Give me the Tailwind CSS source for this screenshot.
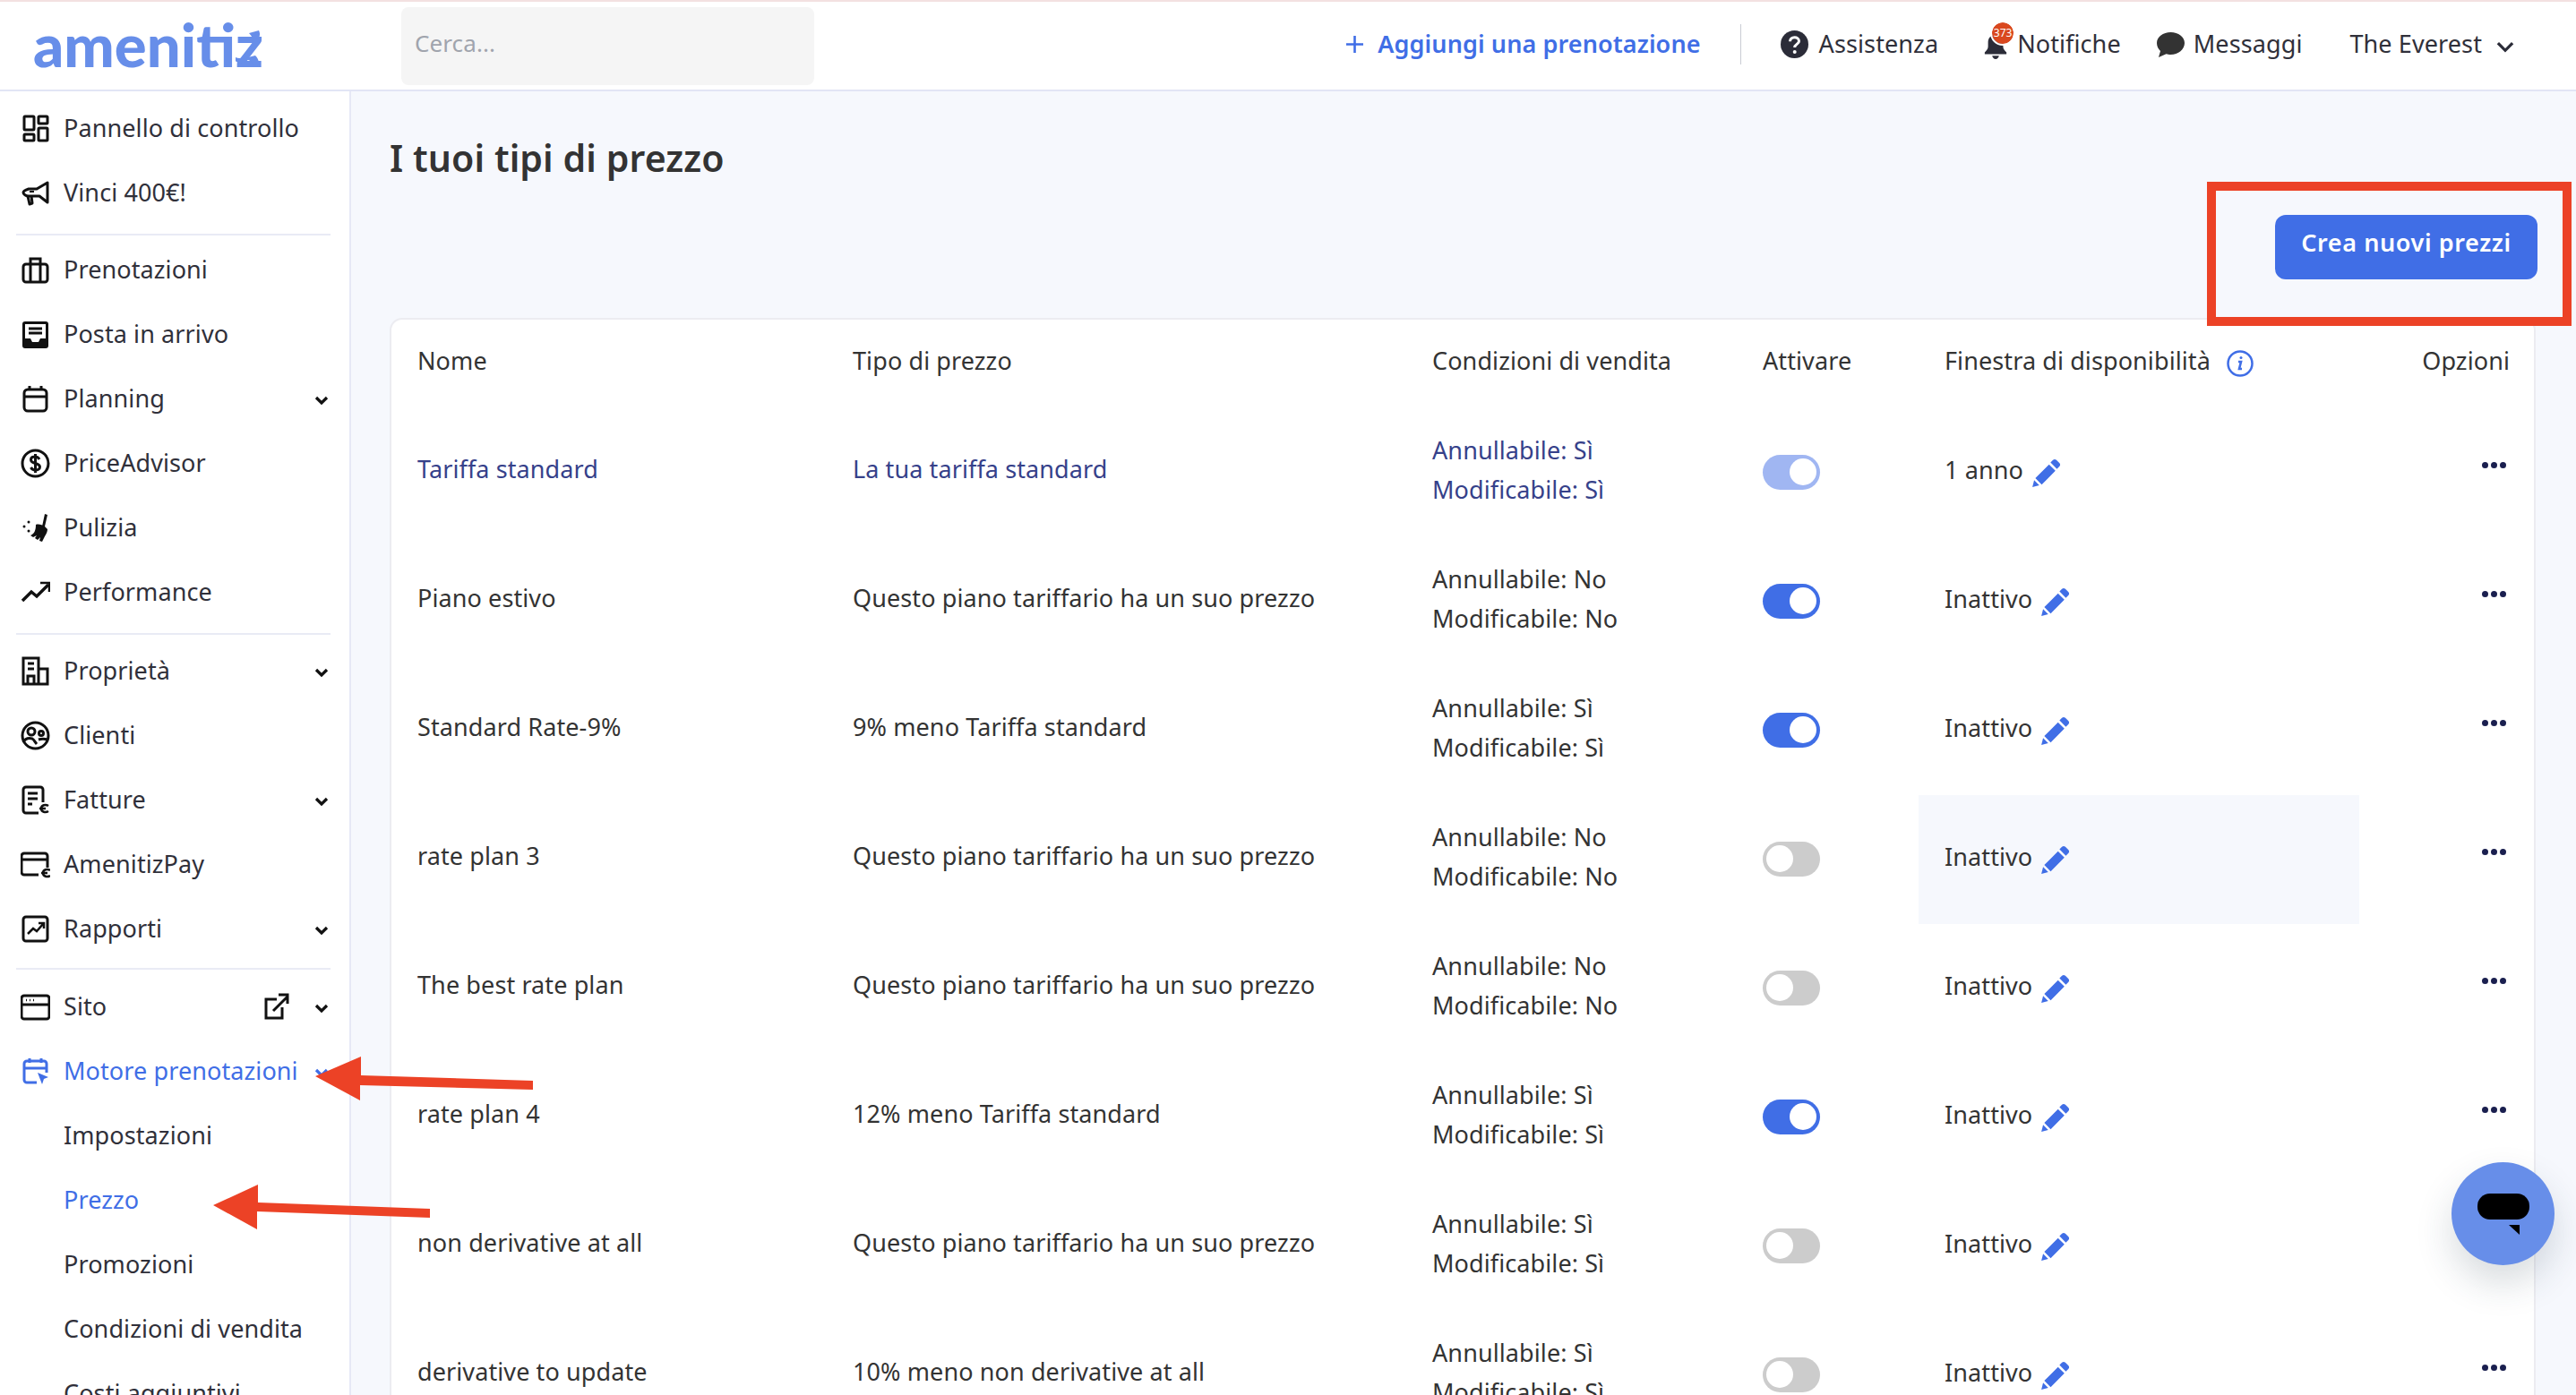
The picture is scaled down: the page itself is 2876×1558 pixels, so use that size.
<!DOCTYPE html>
<html lang="it">
  <head>
    <meta charset="UTF-8" />
    <title>Amenitiz - I tuoi tipi di prezzo</title>
    <script src="https://cdn.jsdelivr.net/npm/@tailwindcss/browser@4"></script>
  </head>
  <body class="relative h-screen overflow-hidden bg-white font-['Noto_Sans',sans-serif] text-[27px] tracking-[0.1px] text-[#30303a]">
    <div class="h-[2px] bg-[#f3e1e1]"></div>

    <!-- header -->
    <header class="flex h-[100px] items-center border-b-2 border-[#e2e5f5] pr-[68px]">
      <div class="relative w-[448px] pl-[37px]">
        <span class="font-['Lato',sans-serif] text-[67px] leading-none font-black tracking-[0px] text-[#678ee9]">amenitiz</span>
        <svg class="absolute top-[18px] left-[263px] h-[41px] w-[27px]" viewBox="0 0 27 41" fill="#678ee9"><path d="M15 3L26 0c2 4 1 8-2 10l-5-2zM0 30c4 2 10 0 14 0l8-2c4 4 5 8 2 13-3-1-6-7-10-8-6 4-12 4-14 1z"/></svg>
      </div>
      <input class="h-[87px] w-[461px] rounded-lg bg-[#f5f5f5] px-[15px] pb-[6px] text-[26px] placeholder:text-[#a0a4ad]" placeholder="Cerca..." />
      <div class="ml-auto flex items-center pb-[3px]">
        <a class="flex items-center gap-[16px] font-semibold text-[#406ee6]">
          <svg class="h-[19px] w-[19px]" viewBox="0 0 19 19" stroke="#406ee6" stroke-width="2.6"><path d="M9.5 0v19M0 9.5h19"/></svg>
          Aggiungi una prenotazione
        </a>
        <div class="mx-[44px] h-[45px] w-[1px] bg-[#c9ccd4]"></div>
        <a class="flex items-center gap-[12px]">
          <svg class="h-[31px] w-[31px]" viewBox="0 0 31 31"><circle cx="15.5" cy="15.5" r="15.5" fill="#2b2c38"/><path d="M10.5 12.3c0-3 2.3-4.6 5-4.6s5 1.600 5 4.200c0 3.600-4.800 3.400-4.800 7" fill="none" stroke="#fff" stroke-width="3"/><circle cx="15.700" cy="24" r="2" fill="#fff"/></svg>
          Assistenza
        </a>
        <a class="relative ml-[50px] flex items-center gap-[10px]">
          <svg class="mt-[4px] h-[28px] w-[28px]" viewBox="0 0 28 30" fill="#2b2c38"><path d="M14 1c5 0 9 3 9 9v5c0 3 2 5 4 7v2H1v-2c2-2 4-4 4-7v-5c0-6 4-9 9-9z"/><path d="M10 26h8c0 2-2 4-4 4s-4-2-4-4z"/></svg>
          Notifiche
          <span class="absolute top-[-4px] left-[10px] flex h-[24px] w-[24px] items-center justify-center rounded-full bg-[#d9481f] text-[12px] leading-none tracking-normal text-white outline-2 outline-white">373</span>
        </a>
        <a class="ml-[40px] flex items-center gap-[10px]">
          <svg class="h-[30px] w-[31px]" viewBox="0 0 31 30" fill="#333"><path d="M15.500 1C24 1 31 6 31 13s-7 13-15.500 13c-2 0-3.500-.2-5-.7L2 29l2-7C1.500 19.500 0 16.500 0 13 0 6 7 1 15.500 1z"/></svg>
          Messaggi
        </a>
        <a class="ml-[53px] flex items-center gap-[15px]">
          The Everest
          <svg class="mt-[5px] h-[13px] w-[22px]" viewBox="0 0 19 12" fill="none" stroke="#2b2c38" stroke-width="3"><path d="M2 2l7.500 7.500L17 2"/></svg>
        </a>
      </div>
    </header>

    <div class="flex h-[1456px]">
      <!-- sidebar -->
      <aside class="w-[392px] shrink-0 border-r-2 border-[#e6e8f6] pt-[5px]">
        <nav>
          <a class="flex h-[72px] items-center"><span class="flex w-[71px] justify-center pl-[8px]"><svg class="h-[31px] w-[31px]" viewBox="0 0 31 31" fill="none" stroke="#111" stroke-width="3"><rect x="3" y="2" width="11" height="15" rx="1"/><rect x="19" y="2" width="10" height="8" rx="1"/><rect x="3" y="22" width="11" height="7" rx="1"/><rect x="19" y="15" width="10" height="14" rx="1"/></svg></span>Pannello di controllo</a>
          <a class="flex h-[72px] items-center"><span class="flex w-[71px] justify-center pl-[8px]"><svg class="h-[31px] w-[31px]" viewBox="0 0 31 31" fill="none" stroke="#111" stroke-width="3" stroke-linejoin="round"><path d="M29 4v22l-9-7H8c-3 0-6-2-6-4s3-3 6-4h9z"/><path d="M7 19l2 9 3-1-1-8"/><path d="M9 14h5" stroke-width="2"/></svg></span>Vinci 400€!</a>
        </nav>
        <hr class="mt-[10px] mr-[21px] mb-[2px] ml-[18px] border-t-2 border-[#e9ebf5]" />
        <nav>
          <a class="flex h-[72px] items-center"><span class="flex w-[71px] justify-center pl-[8px]"><svg class="h-[31px] w-[31px]" viewBox="0 0 31 31" fill="none" stroke="#111" stroke-width="3"><rect x="2" y="9" width="27" height="20" rx="3"/><path d="M10 9V3h11v6M10 9v20M21 9v20"/></svg></span>Prenotazioni</a>
          <a class="flex h-[72px] items-center"><span class="flex w-[71px] justify-center pl-[8px]"><svg class="h-[31px] w-[31px]" viewBox="0 0 31 31"><path d="M4 1h23a3 3 0 0 1 3 3v24a3 3 0 0 1-3 3H4a3 3 0 0 1-3-3V4a3 3 0 0 1 3-3z" fill="#111"/><path d="M4 4h23v16h-6l-2 4h-7l-2-4H4z" fill="#fff"/><path d="M8 9h15M8 14h15" stroke="#111" stroke-width="3"/></svg></span>Posta in arrivo</a>
          <a class="flex h-[72px] items-center"><span class="flex w-[71px] justify-center pl-[8px]"><svg class="h-[31px] w-[31px]" viewBox="0 0 31 31" fill="none" stroke="#111" stroke-width="3"><rect x="3" y="5" width="25" height="24" rx="4"/><path d="M3 13h25M9 1v5M22 1v5"/></svg></span>Planning<svg class="absolute left-[351px] mt-[5px] h-[11px] w-[16px]" viewBox="0 0 16 11" fill="none" stroke="#111" stroke-width="3.200"><path d="M2 2l6 6 6-6"/></svg></a>
          <a class="flex h-[72px] items-center"><span class="flex w-[71px] justify-center pl-[8px]"><svg class="h-[33px] w-[33px]" viewBox="0 0 33 33" fill="none" stroke="#111" stroke-width="3"><circle cx="16.500" cy="16.500" r="14.500"/><path d="M21 12c-1-2-3-3-5-3-3 0-4.500 1.500-4.500 3.500 0 5 10 3 10 8 0 2-2 3.500-5 3.500-2 0-4-1-5-3M16.500 6v21"/></svg></span>PriceAdvisor</a>
          <a class="flex h-[72px] items-center"><span class="flex w-[71px] justify-center pl-[8px]"><svg class="h-[33px] w-[33px]" viewBox="0 0 33 33" fill="#111"><path d="M27 1l3 1-3 13h-3zM17 13c3-1 7 0 10 2l3 3c0 2-1 5-3 8-1 2-2 4-3 6l-3-1 1-4-3 3-3-2 2-3-4 2-3-2c4-2 6-5 6-12z"/><circle cx="4" cy="15" r="1.500"/><circle cx="9" cy="10" r="1.500"/><circle cx="9" cy="20" r="1.500"/></svg></span>Pulizia</a>
          <a class="flex h-[72px] items-center"><span class="flex w-[71px] justify-center pl-[8px]"><svg class="h-[33px] w-[33px]" viewBox="0 0 33 33" fill="none" stroke="#111" stroke-width="3.500"><path d="M2 26l10-10 6 5 13-13"/><path d="M22 6h10v10" stroke-width="2.500"/></svg></span>Performance</a>
        </nav>
        <hr class="mt-[10px] mr-[21px] mb-[4px] ml-[18px] border-t-2 border-[#e9ebf5]" />
        <nav>
          <a class="flex h-[72px] items-center"><span class="flex w-[71px] justify-center pl-[8px]"><svg class="h-[33px] w-[33px]" viewBox="0 0 33 33" fill="none" stroke="#111" stroke-width="3"><path d="M3 2h17v29H3zM20 14h10v17H20zM8 8h7M8 14h7M8 31v-9h7v9"/></svg></span>Proprietà<svg class="absolute left-[351px] mt-[5px] h-[11px] w-[16px]" viewBox="0 0 16 11" fill="none" stroke="#111" stroke-width="3.200"><path d="M2 2l6 6 6-6"/></svg></a>
          <a class="flex h-[72px] items-center"><span class="flex w-[71px] justify-center pl-[8px]"><svg class="h-[33px] w-[33px]" viewBox="0 0 33 33" fill="none" stroke="#111" stroke-width="3"><circle cx="16.500" cy="16.500" r="14.500"/><circle cx="12" cy="12" r="4"/><circle cx="23" cy="14" r="2.500"/><path d="M3 24c2-4 6-5 10-4 2 1 3 4 5 6M20 21c3-1 7-1 10 0"/></svg></span>Clienti</a>
          <a class="flex h-[72px] items-center"><span class="flex w-[71px] justify-center pl-[8px]"><svg class="h-[33px] w-[33px]" viewBox="0 0 33 33" fill="none" stroke="#111" stroke-width="3"><path d="M20 31H6a3 3 0 0 1-3-3V5a3 3 0 0 1 3-3h16a3 3 0 0 1 3 3v14M8 9h11M8 15h11M8 21h5"/><path d="M31 23c-3-2-8-1-8 3s5 5 8 3M21 26h7" stroke-width="2.500"/></svg></span>Fatture<svg class="absolute left-[351px] mt-[5px] h-[11px] w-[16px]" viewBox="0 0 16 11" fill="none" stroke="#111" stroke-width="3.200"><path d="M2 2l6 6 6-6"/></svg></a>
          <a class="flex h-[72px] items-center"><span class="flex w-[71px] justify-center pl-[8px]"><svg class="h-[33px] w-[33px]" viewBox="0 0 33 33" fill="none" stroke="#111" stroke-width="3"><path d="M20 28H4a3 3 0 0 1-3-3V7a3 3 0 0 1 3-3h23a3 3 0 0 1 3 3v13M1 11h29"/><path d="M33 23c-3-2-8-1-8 3s5 5 8 3M23 26h7" stroke-width="2.500"/></svg></span>AmenitizPay</a>
          <a class="flex h-[72px] items-center"><span class="flex w-[71px] justify-center pl-[8px]"><svg class="h-[31px] w-[31px]" viewBox="0 0 31 31" fill="none" stroke="#111" stroke-width="3"><rect x="2" y="2" width="27" height="27" rx="3"/><path d="M7 21l6-6 4 3 7-8M19 9h6v6" stroke-width="2.500"/></svg></span>Rapporti<svg class="absolute left-[351px] mt-[5px] h-[11px] w-[16px]" viewBox="0 0 16 11" fill="none" stroke="#111" stroke-width="3.200"><path d="M2 2l6 6 6-6"/></svg></a>
        </nav>
        <hr class="mt-[8px] mr-[21px] mb-[5px] ml-[18px] border-t-2 border-[#e9ebf5]" />
        <nav>
          <a class="flex h-[72px] items-center"><span class="flex w-[71px] justify-center pl-[8px]"><svg class="h-[33px] w-[33px]" viewBox="0 0 33 33" fill="none" stroke="#111" stroke-width="3"><rect x="1" y="4" width="31" height="26" rx="3"/><path d="M1 14h31"/><path d="M6 9h1M10 9h1M14 9h1" stroke-width="2.500"/></svg></span>Sito<svg class="absolute left-[295px] h-[30px] w-[28px]" viewBox="0 0 28 30" fill="none" stroke="#111" stroke-width="3"><path d="M14 7H2v21h18V16M10 20L26 4M16 2h10v10"/></svg><svg class="absolute left-[351px] mt-[5px] h-[11px] w-[16px]" viewBox="0 0 16 11" fill="none" stroke="#111" stroke-width="3.200"><path d="M2 2l6 6 6-6"/></svg></a>
          <a class="flex h-[72px] items-center text-[#406ee6]"><span class="flex w-[71px] justify-center pl-[8px]"><svg class="h-[31px] w-[31px]" viewBox="0 0 31 31" fill="none" stroke="#406ee6" stroke-width="3"><path d="M17 28H6a3 3 0 0 1-3-3V7a3 3 0 0 1 3-3h19a3 3 0 0 1 3 3v10M3 12h25M9 1v5M22 1v5"/><path d="M18 17l12 5-5 2-2 6z" fill="#406ee6" stroke="none"/></svg></span>Motore prenotazioni<svg class="absolute left-[351px] mt-[5px] h-[11px] w-[16px]" viewBox="0 0 16 11" fill="none" stroke="#406ee6" stroke-width="3.200"><path d="M2 2l6 6 6-6"/></svg></a>
          <a class="flex h-[72px] items-center pl-[71px]">Impostazioni</a>
          <a class="flex h-[72px] items-center pl-[71px] text-[#406ee6]">Prezzo</a>
          <a class="flex h-[72px] items-center pl-[71px]">Promozioni</a>
          <a class="flex h-[72px] items-center pl-[71px]">Condizioni di vendita</a>
          <a class="flex h-[72px] items-center pl-[71px]">Costi aggiuntivi</a>
        </nav>
      </aside>

      <!-- contenuto -->
      <main class="flex-1 bg-[#f6f8fd] pt-[48px] pr-[45px] pl-[43px] text-[#333]">
        <h1 class="h-[52px] text-[41px] leading-[52px] font-semibold text-[#333]">I tuoi tipi di prezzo</h1>
        <div class="mt-[38px] flex justify-end">
          <button class="-mr-[2px] h-[72px] w-[293px] rounded-[12px] bg-[#406ee6] pb-[9px] text-[27px] font-semibold tracking-[0.6px] text-white">Crea nuovi prezzi</button>
        </div>
        <section class="mt-[43px] rounded-t-[14px] border-2 border-[#ececf1] bg-white">
          <div class="grid h-[99px] grid-cols-[486px_647px_369px_203px_492px_1fr] items-center pb-[6px]">
            <div class="px-[29px]">Nome</div>
            <div class="px-[29px]">Tipo di prezzo</div>
            <div class="px-[29px]">Condizioni di vendita</div>
            <div class="px-[29px]">Attivare</div>
            <div class="flex items-center gap-[18px] px-[29px]">Finestra di disponibilità
              <svg class="mt-[4px] h-[30px] w-[30px]" viewBox="0 0 30 30" fill="none" stroke="#406ee6" stroke-width="2.500"><circle cx="15" cy="15" r="13.500"/><path d="M13 13h3l-2 8h3" stroke-width="2.600"/><circle cx="16" cy="8.500" r="1.500" fill="#406ee6" stroke="none"/></svg>
            </div>
            <div class="pr-[27px] text-right">Opzioni</div>
          </div>
          <div id="rows"></div>
        </section>
      </main>
    </div>

    <!-- chat -->
    <button class="absolute top-[1298px] left-[2737px] h-[115px] w-[115px] rounded-full bg-[#678ee9] shadow-[0_20px_40px_rgba(40,60,80,0.18)]">
      <svg class="mx-auto h-[46px] w-[58px]" viewBox="0 0 58 46"><rect width="58" height="29" rx="14" fill="#000"/><path d="M35 35h12v11z" fill="#000"/></svg>
    </button>

    <!-- annotazioni -->
    <div class="absolute top-[203px] left-[2464px] h-[161px] w-[407px] border-[10px] border-[#ec4226]"></div>
    <svg class="pointer-events-none absolute inset-0 h-full w-full">
      <path d="M352 1202L403 1180V1201L595 1207V1217L402 1212V1229Z" fill="#ec4226"/>
      <path d="M238 1346L288 1323V1343L480 1350V1360L287 1353V1373Z" fill="#ec4226"/>
    </svg>

    <script>
      const plans = [
        ['Tariffa standard', 'La tua tariffa standard', 'Sì', 'Sì', 'locked', '1 anno'],
        ['Piano estivo', 'Questo piano tariffario ha un suo prezzo', 'No', 'No', 'on', 'Inattivo'],
        ['Standard Rate-9%', '9% meno Tariffa standard', 'Sì', 'Sì', 'on', 'Inattivo'],
        ['rate plan 3', 'Questo piano tariffario ha un suo prezzo', 'No', 'No', 'off', 'Inattivo'],
        ['The best rate plan', 'Questo piano tariffario ha un suo prezzo', 'No', 'No', 'off', 'Inattivo'],
        ['rate plan 4', '12% meno Tariffa standard', 'Sì', 'Sì', 'on', 'Inattivo'],
        ['non derivative at all', 'Questo piano tariffario ha un suo prezzo', 'Sì', 'Sì', 'off', 'Inattivo'],
        ['derivative to update', '10% meno non derivative at all', 'Sì', 'Sì', 'off', 'Inattivo'],
      ];
      const toggles = {
        locked: 'justify-end bg-[#a0b6f2]',
        on: 'justify-end bg-[#406ee6]',
        off: 'justify-start bg-[#cccccc]',
      };
      document.querySelector('#rows').innerHTML = plans.map((p, i) => {
        const link = i === 0 ? 'text-[#36418a]' : '';
        const hover = i === 3 ? 'bg-[#f6f8fd]' : '';
        return `
          <div class="grid h-[144px] grid-cols-[486px_647px_369px_203px_492px_1fr] items-center">
            <div class="px-[29px] pb-[7px] ${link}">${p[0]}</div>
            <div class="px-[29px] pb-[7px] ${link}">${p[1]}</div>
            <div class="px-[29px] pb-[7px] leading-[44px] ${link}">Annullabile: ${p[2]}<br />Modificabile: ${p[3]}</div>
            <div class="px-[29px] pb-[2px]"><span class="flex h-[39px] w-[64px] items-center rounded-full px-[4px] ${toggles[p[4]]}"><span class="h-[30px] w-[30px] rounded-full bg-white"></span></span></div>
            <div class="flex h-full items-center gap-[9px] px-[29px] pb-[6px] ${hover}">${p[5]}
              <svg class="mt-[4px] h-[35px] w-[35px]" viewBox="0 0 32 32" fill="#406ee6"><path d="M22 3.500a2.500 2.500 0 0 1 3.500 0l3 3a2.500 2.500 0 0 1 0 3.500L26 12.500 19.500 6zM18 8l6.500 6.500-14 14L4 22zM2.800 24L8 29.200 1 31z"/></svg>
            </div>
            <div class="flex justify-end gap-[3px] pr-[31px] pb-[18px]"><i class="h-[7px] w-[7px] rounded-full bg-[#1a1f4f]"></i><i class="h-[7px] w-[7px] rounded-full bg-[#1a1f4f]"></i><i class="h-[7px] w-[7px] rounded-full bg-[#1a1f4f]"></i></div>
          </div>`;
      }).join('');
    </script>
  </body>
</html>
